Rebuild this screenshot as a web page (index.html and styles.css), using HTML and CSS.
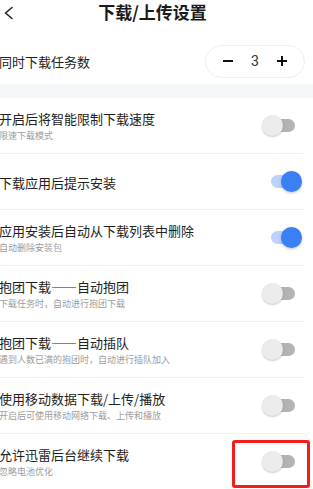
FILE: index.html
```html
<!DOCTYPE html>
<html lang="zh-CN">
<head>
<meta charset="utf-8">
<title>下载/上传设置</title>
<link rel="stylesheet" href="styles.css">
</head>
<body>
<div class="page">
  <header class="header">
    <svg class="back" width="12" height="14" viewBox="0 0 12 14"><polyline points="9,1.5 2.5,7 9,12.5" fill="none" stroke="#222" stroke-width="1.6" stroke-linecap="round" stroke-linejoin="round"/></svg>
    <h1 class="title">下载/上传设置</h1>
  </header>

  <div class="count-row">
    <span class="row-title">同时下载任务数</span>
    <div class="stepper">
      <svg width="12" height="12" viewBox="0 0 12 12"><line x1="1" y1="6" x2="11" y2="6" stroke="#111" stroke-width="2"/></svg>
      <span class="num">3</span>
      <svg width="12" height="12" viewBox="0 0 12 12"><line x1="1" y1="6" x2="11" y2="6" stroke="#111" stroke-width="2"/><line x1="6" y1="1" x2="6" y2="11" stroke="#111" stroke-width="2"/></svg>
    </div>
  </div>

  <div class="band"></div>

  <ul class="list">
    <li class="row">
      <div class="text"><span class="row-title">开启后将智能限制下载速度</span><span class="sub">限速下载模式</span></div>
      <span class="switch"></span>
    </li>
    <li class="row">
      <div class="text"><span class="row-title">下载应用后提示安装</span></div>
      <span class="switch on"></span>
    </li>
    <li class="row">
      <div class="text"><span class="row-title">应用安装后自动从下载列表中删除</span><span class="sub">自动删除安装包</span></div>
      <span class="switch on"></span>
    </li>
    <li class="row">
      <div class="text"><span class="row-title">抱团下载——自动抱团</span><span class="sub">下载任务时，自动进行抱团下载</span></div>
      <span class="switch"></span>
    </li>
    <li class="row">
      <div class="text"><span class="row-title">抱团下载——自动插队</span><span class="sub">遇到人数已满的抱团时，自动进行插队加入</span></div>
      <span class="switch"></span>
    </li>
    <li class="row">
      <div class="text"><span class="row-title">使用移动数据下载/上传/播放</span><span class="sub">开启后可使用移动网络下载、上传和播放</span></div>
      <span class="switch"></span>
    </li>
    <li class="row last">
      <div class="text"><span class="row-title">允许迅雷后台继续下载</span><span class="sub">忽略电池优化</span></div>
      <span class="switch"></span>
      <span class="highlight"></span>
    </li>
  </ul>
</div>
</body>
</html>
```
FILE: styles.css
```css
html, body {
  margin: 0;
  padding: 0;
  background: #fff;
  overflow: hidden;
}
body {
  font-family: "Noto Sans CJK SC", "Noto Sans", sans-serif;
  color: #222;
}
.page {
  width: 321px;
  margin-left: -8px;
}
.header {
  position: relative;
  height: 24px;
  display: flex;
  align-items: center;
  justify-content: center;
}
.back {
  position: absolute;
  left: 11px;
  top: 6px;
}
.title {
  margin: 0;
  font-size: 17px;
  font-weight: 700;
  line-height: 24px;
  color: #1a1a1a;
}
.count-row {
  margin: 14px 8px 0 7px;
  height: 46px;
  display: flex;
  align-items: center;
  justify-content: space-between;
}
.row-title {
  font-size: 13px;
  line-height: 17px;
  color: #222;
  white-space: nowrap;
}
.stepper {
  width: 98px;
  height: 31px;
  border: 1px solid #eeeeee;
  border-radius: 17px;
  display: flex;
  align-items: center;
  justify-content: center;
  gap: 16px;
}
.num {
  font-family: "Roboto", "Noto Sans", sans-serif;
  font-size: 14px;
  color: #333;
  width: 10px;
  text-align: center;
}
.band {
  height: 14px;
  background: #f5f7fa;
}
.list {
  list-style: none;
  margin: 0;
  padding: 0;
}
.row {
  position: relative;
  height: 55px;
  margin: 0 8px 0 7px;
  padding-right: 3px;
  border-bottom: 1px solid #f0f0f0;
  display: flex;
  align-items: center;
  justify-content: space-between;
}
.row.last {
  border-bottom: none;
}
.text {
  display: flex;
  flex-direction: column;
  gap: 2px;
  padding-top: 1px;
}
.sub {
  font-size: 9px;
  line-height: 13px;
  color: #9c9c9c;
  white-space: nowrap;
}
.switch {
  position: relative;
  width: 40px;
  height: 21px;
  flex: none;
}
.switch::before {
  content: "";
  position: absolute;
  left: 9px;
  top: 4px;
  width: 24px;
  height: 13px;
  border-radius: 7px;
  background: #b3b3b3;
}
.switch::after {
  content: "";
  position: absolute;
  left: 0;
  top: 0;
  width: 21px;
  height: 21px;
  border-radius: 50%;
  background: #ececec;
  box-shadow: 0 1px 2px rgba(0,0,0,0.22);
}
.switch.on::before {
  background: #bcd2fb;
}
.switch.on::after {
  left: 19px;
  background: #3b7ff5;
  box-shadow: 0 1px 3px rgba(0,0,0,0.25);
}
.highlight {
  position: absolute;
  left: 233px;
  top: 6px;
  width: 72px;
  height: 42px;
  border: 3px solid #f31c1c;
  border-radius: 3px;
}
```
